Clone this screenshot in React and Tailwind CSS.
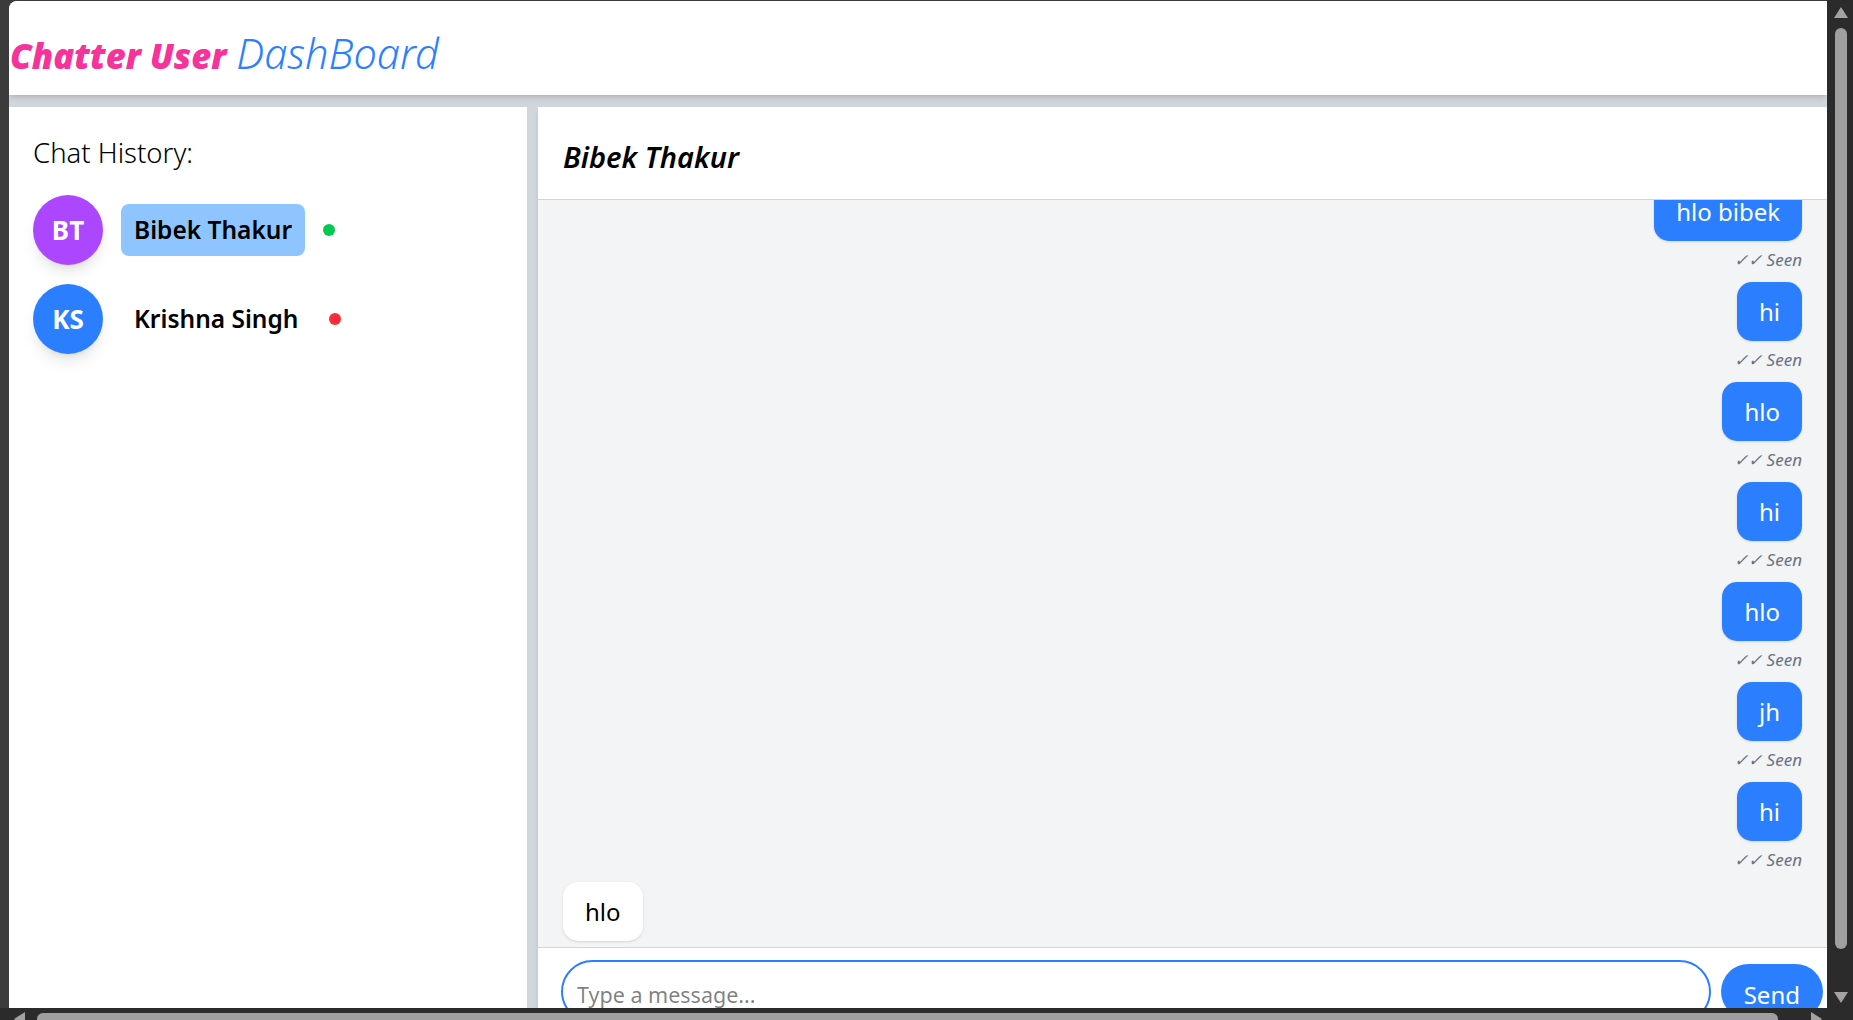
import React from "react";

function Sent({ text }) {
  return (
    <div className="flex flex-col items-end">
      <div className="bg-blue-500 text-white rounded-[15px] px-[22px] py-[12px] text-[24px] leading-[35px] shadow-sm">
        {text}
      </div>
      <div className="mt-[6px] text-[17px] leading-[25px] italic text-gray-500">✓✓ Seen</div>
    </div>
  );
}

function Contact({ initials, name, avatar, active, dot }) {
  return (
    <div className="flex items-center gap-[18px]">
      <div
        className={`w-[70px] h-[70px] rounded-full ${avatar} shadow-lg flex items-center justify-center text-white font-bold text-[26px]`}
      >
        {initials}
      </div>
      <div
        className={`rounded-[8px] px-[13px] py-[8px] text-[24.5px] leading-[36px] font-semibold text-black ${
          active ? "bg-blue-300" : ""
        }`}
      >
        {name}
      </div>
      <div className={`w-[12px] h-[12px] rounded-full ${dot}`} />
    </div>
  );
}

export default function App() {
  const msgs = ["hlo bibek", "hi", "hlo", "hi", "hlo", "jh", "hi"];
  return (
    <div className="w-[1853px] h-[1020px] overflow-hidden bg-[#3b3b3b] flex flex-col font-['Noto_Sans','Open_Sans',sans-serif]">
      <div className="flex h-[1008px] shrink-0">
        <div className="w-[9px] shrink-0" />
        <div className="w-[1818px] mt-px h-[1007px] rounded-tl-[8px] overflow-hidden bg-gray-300 flex flex-col">
          {/* Header */}
          <header className="h-[94px] shrink-0 bg-white shadow-md flex items-center pl-[1px] pt-[10px] relative z-10">
            <h1 className="flex items-baseline gap-[10px] italic">
              <span className="text-[34.5px] font-black text-pink-500">Chatter User</span>
              <span className="text-[41.5px] font-light text-blue-500">DashBoard</span>
            </h1>
          </header>

          <div className="flex gap-[11px] mt-[12px] flex-1 min-h-0">
            {/* Sidebar */}
            <aside className="w-[518px] shrink-0 bg-white px-[24px] pt-[26px]">
              <h2 className="text-[27.5px] leading-[40px] font-light text-black">Chat History:</h2>
              <div className="mt-[22px] flex flex-col gap-[19px]">
                <Contact initials="BT" name="Bibek Thakur" avatar="bg-purple-500" active dot="bg-green-500" />
                <Contact initials="KS" name="Krishna Singh" avatar="bg-blue-500" dot="bg-red-500" />
              </div>
            </aside>

            {/* Chat panel */}
            <section className="flex-1 min-w-0 bg-white shadow-md flex flex-col overflow-hidden">
              <div className="h-[93px] shrink-0 border-b border-gray-300 flex items-center px-[25px] pt-[8px]">
                <h3 className="text-[29px] italic font-semibold text-black">Bibek Thakur</h3>
              </div>
              <div className="h-[747px] shrink-0 overflow-hidden bg-gray-100 flex flex-col justify-end gap-[10px] px-[25px] pb-[6px]">
                {msgs.map((m, i) => (
                  <Sent key={i} text={m} />
                ))}
                <div className="self-start bg-white text-black rounded-[15px] px-[22px] py-[12px] text-[24px] leading-[35px] shadow-sm">
                  hlo
                </div>
              </div>
              <div className="shrink-0 border-t border-gray-300 flex items-center gap-[10px] pl-[23px] pr-[4px] pt-[12px]">
                <input
                  className="flex-1 min-w-0 rounded-full border-2 border-blue-500 px-[14px] pt-[15px] pb-[9px] text-[21.5px] leading-[35px] outline-none text-black"
                  placeholder="Type a message..."
                />
                <button className="bg-blue-500 text-white rounded-full px-[23px] pt-[13px] pb-[7px] text-[24px] leading-[35px]">
                  Send
                </button>
              </div>
            </section>
          </div>
        </div>

        {/* Vertical scrollbar */}
        <div className="w-[26px] shrink-0 bg-[#2b2b2b] flex flex-col items-center">
          <svg width="14" height="11" viewBox="0 0 14 11" className="mt-[7px] ml-[1px]">
            <polygon points="7,0 14,11 0,11" fill="#a3a3a3" />
          </svg>
          <div className="mt-[10px] ml-[1px] w-[12px] h-[921px] rounded-full bg-[#9f9f9f]" />
          <svg width="14" height="11" viewBox="0 0 14 11" className="mt-[43px] ml-[1px]">
            <polygon points="0,0 14,0 7,11" fill="#a3a3a3" />
          </svg>
        </div>
      </div>

      {/* Horizontal scrollbar */}
      <div className="h-[12px] shrink-0 bg-[#2b2b2b] flex items-start">
        <svg width="11" height="14" viewBox="0 0 11 14" className="mt-[4px] ml-[14px]">
          <polygon points="11,0 11,14 0,7" fill="#a3a3a3" />
        </svg>
        <div className="mt-[5px] ml-[12px] w-[1741px] h-[12px] rounded-full bg-[#9f9f9f]" />
        <svg width="11" height="14" viewBox="0 0 11 14" className="mt-[4px] ml-[33px]">
          <polygon points="0,0 11,7 0,14" fill="#a3a3a3" />
        </svg>
      </div>
    </div>
  );
}
